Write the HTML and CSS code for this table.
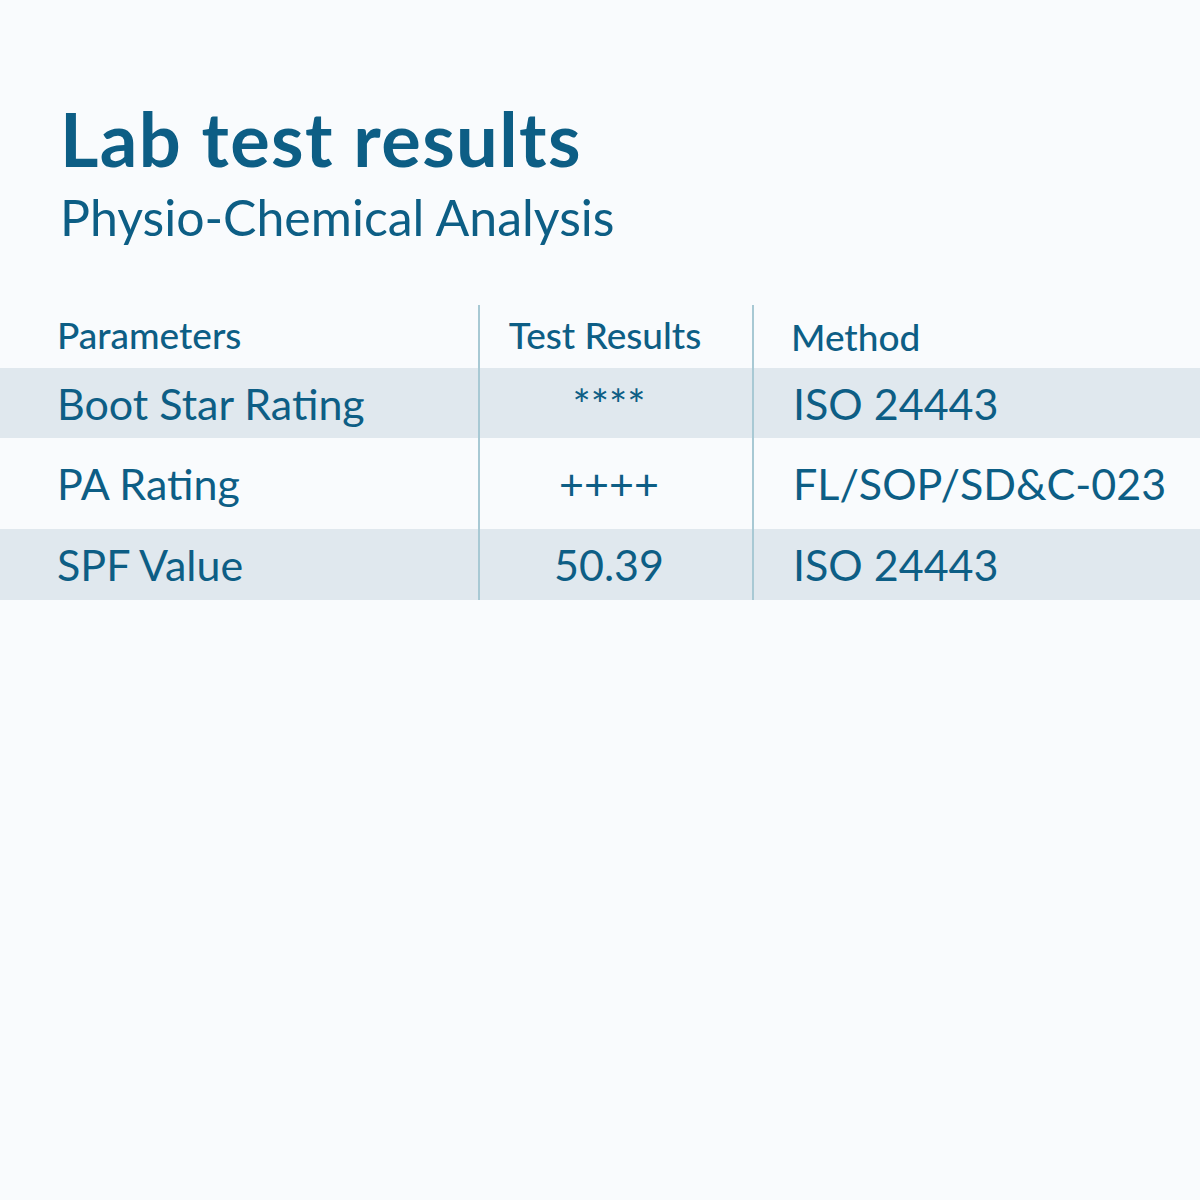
FILE: index.html
```html
<!DOCTYPE html>
<html>
<head>
<meta charset="utf-8">
<link rel="stylesheet" href="styles.css">
</head>
<body>
<div class="page">
  <header class="heading">
    <h1 class="title">Lab test results</h1>
    <p class="subtitle">Physio-Chemical Analysis</p>
  </header>
  <div class="table">
    <div class="row head">
      <div class="cell c1">Parameters</div>
      <div class="cell c2 head-c2">Test Results</div>
      <div class="cell c3">Method</div>
    </div>
    <div class="row band r1">
      <div class="cell c1">Boot Star Rating</div>
      <div class="cell c2">****</div>
      <div class="cell c3">ISO 24443</div>
    </div>
    <div class="row r2">
      <div class="cell c1">PA Rating</div>
      <div class="cell c2">++++</div>
      <div class="cell c3">FL/SOP/SD&amp;C-023</div>
    </div>
    <div class="row band r3">
      <div class="cell c1">SPF Value</div>
      <div class="cell c2">50.39</div>
      <div class="cell c3">ISO 24443</div>
    </div>
  </div>
</div>
</body>
</html>
```
FILE: styles.css
```css
html, body {
  margin: 0;
  padding: 0;
  background: #f9fbfd;
}
body {
  font-family: "Lato", "Liberation Sans", sans-serif;
  color: #0d5e85;
  width: 1200px;
  height: 1200px;
  overflow: hidden;
}
.page {
  padding-top: 102px;
}
.heading {
  padding-left: 60px;
}
.title {
  margin: 0;
  font-size: 74px;
  font-weight: 700;
  line-height: 74px;
  letter-spacing: 1.4px;
}
.subtitle {
  margin: 16px 0 0 0;
  font-size: 50px;
  font-weight: 400;
  line-height: 50px;
}
.table {
  margin-top: 63px;
}
.row {
  display: grid;
  grid-template-columns: 478px 274px 1fr;
}
.band {
  background: #e0e8ee;
}
.head { height: 63px; }
.r1 { height: 70px; }
.r2 { height: 91px; }
.r3 { height: 71px; }
.cell {
  display: flex;
  align-items: center;
  font-size: 43px;
  line-height: 43px;
  white-space: nowrap;
}
.head .cell {
  font-size: 37px;
  line-height: 37px;
  font-weight: 500;
  padding-bottom: 4px;
}
.head .c3 {
  padding-bottom: 0;
}
.c1 {
  padding-left: 57px;
}
.c2 {
  justify-content: center;
  border-left: 2px solid #a8c9d4;
  padding-right: 14px;
}
.head .head-c2 {
  padding-right: 22px;
}
.c3 {
  border-left: 2px solid #a8c9d4;
  padding-left: 37px;
}
.r1 .c3, .r2 .c3, .r3 .c3 {
  padding-left: 39px;
}
```
